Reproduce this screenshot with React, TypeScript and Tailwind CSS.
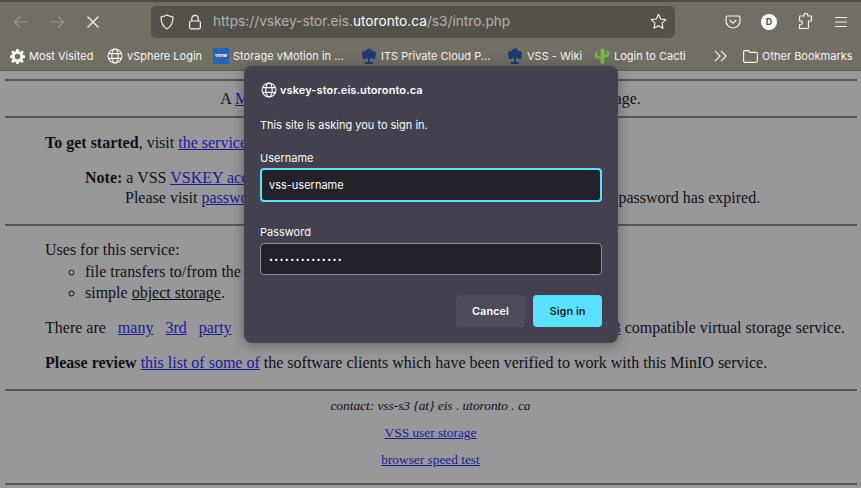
import React from "react";

const ui = "font-['Inter','Noto_Sans',sans-serif]";

function Globe({ size = 16, className = "" }: { size?: number; className?: string }) {
  return (
    <svg width={size} height={size} viewBox="0 0 16 16" fill="none" stroke="currentColor" strokeWidth="1.1" className={className}>
      <circle cx="8" cy="8" r="7" />
      <ellipse cx="8" cy="8" rx="3.2" ry="7" />
      <path d="M1.3 5.6h13.4M1.3 10.4h13.4" />
    </svg>
  );
}

function Tree() {
  return (
    <svg width="16" height="17" viewBox="0 0 16 17" className="shrink-0">
      <g fill="#1d3a75">
        <circle cx="8" cy="3.5" r="3" />
        <circle cx="4" cy="6" r="3" />
        <circle cx="12" cy="6" r="3" />
        <circle cx="8" cy="7" r="3.5" />
        <circle cx="3.5" cy="9" r="2.2" />
        <circle cx="12.5" cy="9" r="2.2" />
        <path d="M7 8h2v6h3v2H4v-2h3z" />
      </g>
    </svg>
  );
}

function Bookmark({ icon, label, width }: { icon: React.ReactNode; label: string; width: string }) {
  return (
    <div className={`flex items-center gap-[4px] shrink-0 ${width}`}>
      {icon}
      <span className="whitespace-nowrap">{label}</span>
    </div>
  );
}

function Rule() {
  return <div className="h-[2px] mx-[5px] mr-[4px] bg-[#555558]" />;
}

function Link({ children }: { children: React.ReactNode }) {
  return <a className="text-[#1a1a9c] underline">{children}</a>;
}

function Toolbar() {
  return (
    <div className="h-[38px] flex items-center pt-[1px] text-white">
      <div className="flex items-center w-[151px] pl-[13px] gap-[20px] shrink-0">
        <svg width="16" height="14" viewBox="0 0 16 14" fill="none" stroke="#97958d" strokeWidth="1.2">
          <path d="M15 7H1.5M7 1.5 1.5 7 7 12.5" />
        </svg>
        <svg width="16" height="14" viewBox="0 0 16 14" fill="none" stroke="#97958d" strokeWidth="1.2">
          <path d="M1 7h13.5M9 1.5 14.5 7 9 12.5" />
        </svg>
        <svg width="14" height="14" viewBox="0 0 14 14" fill="none" stroke="#f4f4f2" strokeWidth="1.3" className="ml-[1px]">
          <path d="M1.5 1.5l11 11M12.5 1.5l-11 11" />
        </svg>
      </div>
      <div className="w-[524px] h-[32px] rounded-[5px] bg-[#54514a] flex items-center shrink-0 pl-[8px] pr-[8px]">
        <svg width="16" height="16" viewBox="0 0 16 16" fill="none" stroke="#f1f1ef" strokeWidth="1.2">
          <path d="M8 1c2 1.200 4 1.700 6 1.800 0 5-1.500 9.800-6 12.200C3.500 12.600 2 7.800 2 2.800 4 2.700 6 2.200 8 1z" strokeLinejoin="round" />
        </svg>
        <svg width="14" height="16" viewBox="0 0 14 16" fill="none" stroke="#f1f1ef" strokeWidth="1.2" className="ml-[13px]">
          <rect x="1.600" y="7" width="10.800" height="7.800" rx="1.500" />
          <path d="M3.800 7V4.500a3.200 3.200 0 0 1 6.400 0V7" />
        </svg>
        <div className="ml-[11px] text-[13.700px] text-[#b4b2ab] whitespace-nowrap">
          https://vskey-stor.eis.<span className="text-white">utoronto.ca</span>/s3/intro.php
        </div>
        <svg width="17" height="17" viewBox="0 0 17 17" fill="none" stroke="#f1f1ef" strokeWidth="1.150" strokeLinejoin="round" className="ml-auto">
          <path d="M8.500 1.300l2.200 4.700 5.100.6-3.800 3.500 1 5.100-4.500-2.500L4 15.200l1-5.100L1.200 6.600l5.100-.6z" />
        </svg>
      </div>
      <div className="flex items-center ml-[50px] gap-[20px]">
        <svg width="16" height="16" viewBox="0 0 16 16" fill="none" stroke="#f1f1ef" strokeWidth="1.200">
          <path d="M2.500 2h11A1.500 1.500 0 0 1 15 3.500V7a7 7 0 0 1-14 0V3.500A1.500 1.500 0 0 1 2.500 2z" />
          <path d="M5 6.300l3 2.900 3-2.900" strokeLinecap="round" />
        </svg>
        <div className="w-[16px] h-[16px] rounded-full bg-white text-[#54514a] text-[9px] font-bold flex items-center justify-center">D</div>
        <svg width="16" height="17" viewBox="0 0 16 17" fill="none" stroke="#f1f1ef" strokeWidth="1.200" strokeLinejoin="round">
          <path d="M7 3.500V2.800a1.900 1.900 0 0 1 3.800 0v.7h3.700v5h-3v6.500a1 1 0 0 1-1 1H2.500v-4h1a1.800 1.800 0 0 0 0-3.600h-1V3.500z" transform="translate(0 -.5)" />
        </svg>
        <svg width="14" height="12" viewBox="0 0 14 12" fill="none" stroke="#f1f1ef" strokeWidth="1.200" className="ml-[1px]">
          <path d="M1 1.500h12M1 6h12M1 10.500h12" />
        </svg>
      </div>
    </div>
  );
}

function BookmarksBar() {
  return (
    <div className="h-[26px] mt-[3px] flex items-center pl-[10px] text-[11px] text-[#f5f5f3]">
      <Bookmark
        width="w-[97px]"
        icon={
          <svg width="15" height="15" viewBox="0 0 16 16" className="shrink-0">
            <path fill="#f5f5f3" fillRule="evenodd" d="M6.700 0h2.600l.4 2.200 1.300.6L12.900 1.500l1.800 1.800-1.300 1.900.5 1.300 2.100.4v2.600l-2.100.4-.5 1.300 1.300 1.900-1.800 1.800-1.900-1.300-1.300.6-.4 2.100H6.700l-.4-2.100-1.300-.6-1.900 1.300-1.800-1.800 1.300-1.900-.5-1.300L0 9.500V6.900l2.100-.4.500-1.300-1.300-1.900 1.800-1.800L5 2.800l1.300-.6zM8 5a3 3 0 1 0 0 6 3 3 0 0 0 0-6z" />
          </svg>
        }
        label="Most Visited"
      />
      <Bookmark width="w-[106px]" icon={<Globe size={16} className="shrink-0" />} label="vSphere Login" />
      <Bookmark
        width="w-[148px]"
        icon={
          <div className="w-[16px] h-[16px] shrink-0 bg-[#2a62ad] flex items-center justify-center text-[5px] font-bold text-white">vmw</div>
        }
        label="Storage vMotion in ..."
      />
      <Bookmark width="w-[146px]" icon={<Tree />} label="ITS Private Cloud P..." />
      <Bookmark width="w-[87px]" icon={<Tree />} label="VSS - Wiki" />
      <Bookmark
        width="w-[120px]"
        icon={
          <svg width="16" height="16" viewBox="0 0 16 16" fill="none" stroke="#7ab648" strokeLinecap="round" className="shrink-0">
            <path d="M8.500 2.500v12" strokeWidth="4" />
            <path d="M2.300 5.500v2.500q0 1.500 1.500 1.500h4M14 4v2.500Q14 8 12.500 8H9" strokeWidth="2.400" />
          </svg>
        }
        label="Login to Cacti"
      />
      <svg width="13" height="12" viewBox="0 0 13 12" fill="none" stroke="#f5f5f3" strokeWidth="1.200" className="shrink-0 mr-[16px]">
        <path d="M1 .8 6 6l-5 5.200M7 .8 12 6l-5 5.200" />
      </svg>
      <Bookmark
        width="w-[112px]"
        icon={
          <svg width="15" height="13" viewBox="0 0 15 13" fill="none" stroke="#f5f5f3" strokeWidth="1.100" className="shrink-0">
            <path d="M.6 2A1.400 1.400 0 0 1 2 .6h3.500L7 2.400h6A1.400 1.400 0 0 1 14.400 3.800V11a1.400 1.400 0 0 1-1.400 1.400H2A1.400 1.400 0 0 1 .6 11z" />
          </svg>
        }
        label="Other Bookmarks"
      />
    </div>
  );
}

function Dialog() {
  return (
    <div className={`absolute left-[244px] top-[66px] w-[374px] h-[277px] rounded-[8px] bg-[#42414d] text-[#fbfbfe] pl-[16px] pr-[16px] shadow-[0_2px_14px_rgba(0,0,0,0.35)] ${ui}`}>
      <div className="flex items-center gap-[3px] h-[16px] mt-[16px] font-semibold text-[11px] tracking-[0.1px]">
        <Globe size={16} className="shrink-0 ml-[1px]" />
        <span>vskey-stor.eis.utoronto.ca</span>
      </div>
      <p className="mt-[19px] text-[11px] leading-[16px]">This site is asking you to sign in.</p>
      <label className="block mt-[17px] text-[11px] leading-[16px]">Username</label>
      <div className="mt-[2px] h-[34px] rounded-[4px] border-2 border-[#5be0ff] bg-[#23222b] flex items-center pl-[7px] text-[11px]">vss-username</div>
      <label className="block mt-[22px] text-[11px] leading-[16px]">Password</label>
      <div className="mt-[3px] h-[32px] rounded-[4px] border border-[#8f8f9d] bg-[#23222b] flex items-center pl-[8px] text-[7px] tracking-[1.350px] leading-none">••••••••••••••</div>
      <div className="flex justify-end gap-[8px] mt-[20px] text-[11px] font-semibold">
        <button className="w-[69px] h-[32px] rounded-[4px] bg-[#4d4c58] text-[#fbfbfe]">Cancel</button>
        <button className="w-[69px] h-[32px] rounded-[4px] bg-[#5be0ff] text-[#2b2a33]">Sign in</button>
      </div>
    </div>
  );
}

export default function App() {
  return (
    <div className="relative w-[861px] h-[488px] overflow-hidden bg-[#98989b]">
      <header className={`h-[71px] bg-[#716e65] border-t-2 border-[#4f4c45] border-b border-b-[#5a5850] ${ui}`}>
        <Toolbar />
        <BookmarksBar />
      </header>
      <main className="pt-[8px] font-['Liberation_Serif',serif] text-[16px] leading-[18px] text-[#111114]">
        <Rule />
        <p className="mt-[9px] text-center">
          A <Link>MinIO</Link> S3 compatible service for VSS users and object storage.
        </p>
        <div className="mt-[8px]"><Rule /></div>
        <p className="mt-[16px] ml-[45px] whitespace-nowrap">
          <b>To get started</b>, visit <Link>the service</Link> page and log in with your credentials.
        </p>
        <p className="mt-[16px] ml-[85px] whitespace-nowrap leading-[20px]">
          <b>Note:</b> a VSS <Link>VSKEY account</Link> is required to access this service and log in.
          <br />
          <span className="ml-[40px]">Please visit <Link>password</Link> reset if you have forgotten your password or your own password has expired.</span>
        </p>
        <div className="mt-[16px]"><Rule /></div>
        <p className="mt-[15px] ml-[45px]">Uses for this service:</p>
        <ul className="ml-[85px] mt-[2px] list-[circle] leading-[21px]">
          <li>file transfers to/from the VSS storage system;</li>
          <li>
            simple <span className="underline">object storage</span>.
          </li>
        </ul>
        <div className="mt-[16px] ml-[45px] mr-[16px] flex gap-[12px] whitespace-nowrap">
          <span>There are</span>
          <Link>many</Link>
          <Link>3rd</Link>
          <Link>party</Link>
          <span>clients for use with this</span>
          <span className="ml-auto"><Link>S3</Link> compatible virtual storage service.</span>
        </div>
        <p className="mt-[17px] ml-[45px] whitespace-nowrap">
          <b>Please review</b> <Link>this list of some of</Link> the software clients which have been verified to work with this MinIO service.
        </p>
        <div className="mt-[17px]"><Rule /></div>
        <div className="text-center text-[13.330px] leading-[16px]">
          <p className="mt-[7px] italic">contact: vss-s3 {"{at}"} eis . utoronto . ca</p>
          <p className="mt-[11px]"><Link>VSS user storage</Link></p>
          <p className="mt-[11px]"><Link>browser speed test</Link></p>
        </div>
        <div className="mt-[15px]"><Rule /></div>
      </main>
      <Dialog />
    </div>
  );
}
